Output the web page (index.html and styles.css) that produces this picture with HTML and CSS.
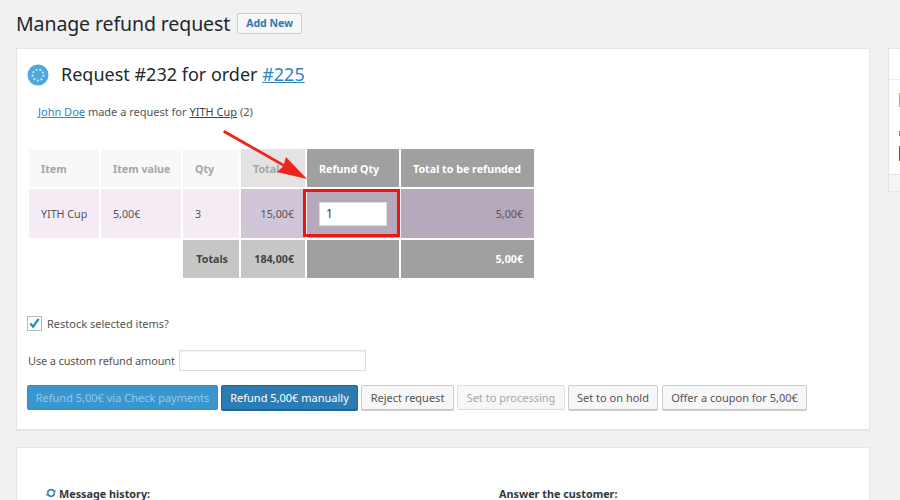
FILE: index.html
```html
<!DOCTYPE html>
<html lang="en">
<head>
<meta charset="utf-8">
<title>Manage refund request</title>
<link rel="stylesheet" href="styles.css">
</head>
<body>
<div class="page">
  <div class="main">
    <header class="page-head">
      <h1>Manage refund request</h1>
      <a class="add-new">Add New</a>
    </header>
    <section class="card request">
      <div class="title-row">
        <svg class="status" viewBox="0 0 22 22" width="22" height="22">
          <circle cx="11" cy="11" r="10.5" fill="#4fa8da"/>
          <circle cx="11" cy="11" r="5.5" fill="none" stroke="#d5ebf7" stroke-width="1.8" stroke-dasharray="1.8 2"/>
        </svg>
        <h2>Request #232 for order <a href="#">#225</a></h2>
      </div>
      <p class="summary"><a class="blue" href="#">John Doe</a> made a request for <a class="dark" href="#">YITH Cup</a> (2)</p>
      <div class="table-wrap">
        <table>
          <thead>
            <tr>
              <th class="c1">Item</th><th class="c2">Item value</th><th class="c3">Qty</th><th class="c4 total-h">Total</th><th class="c5 dark-h">Refund Qty</th><th class="c6 dark-h">Total to be refunded</th>
            </tr>
          </thead>
          <tbody>
            <tr class="row">
              <td>YITH Cup</td><td>5,00€</td><td>3</td><td class="num total-c">15,00€</td><td class="qty-c"><input class="qty" type="text" value="1"></td><td class="num qty-c">5,00€</td>
            </tr>
            <tr class="foot">
              <td class="blank" colspan="2"></td><td class="lab">Totals</td><td class="num lab">184,00€</td><td class="dk"></td><td class="num dk">5,00€</td>
            </tr>
          </tbody>
        </table>
        <div class="highlight"></div>
        <svg class="arrow" viewBox="0 0 100 60" width="100" height="60">
          <path d="M0 2.500 L1.500 0 L61 34 L63 27 L84 49 L54 42 L60 36.500 Z" fill="#f0241c"/>
        </svg>
      </div>
      <label class="restock"><span class="check"><svg viewBox="0 0 14 14" width="14" height="14"><path d="M2.500 7.500 L5.500 11 L11.500 2.500" fill="none" stroke="#1e8cbe" stroke-width="2.400"/></svg></span>Restock selected items?</label>
      <div class="custom"><span class="custom-label">Use a custom refund amount</span><input class="amount" type="text"></div>
      <div class="actions">
        <a class="btn pale">Refund 5,00€ via Check payments</a>
        <a class="btn primary">Refund 5,00€ manually</a>
        <a class="btn reject">Reject request</a>
        <a class="btn off">Set to processing</a>
        <a class="btn hold">Set to on hold</a>
        <a class="btn coupon">Offer a coupon for 5,00€</a>
      </div>
    </section>
    <section class="card messages">
      <div class="msg-col"><svg class="refresh" viewBox="0 0 10 10" width="10" height="10"><path d="M1.700 5 A3.300 3.300 0 0 1 8 3.600 M8.300 5 A3.300 3.300 0 0 1 2 6.400" fill="none" stroke="#2e7fb8" stroke-width="1.600"/><path d="M9.500 1.500 L9.500 4.500 L6.500 4.500 Z M.5 8.500 L.5 5.500 L3.500 5.500 Z" fill="#2e7fb8"/></svg><strong>Message history:</strong></div>
      <div class="msg-col answer"><strong>Answer the customer:</strong></div>
    </section>
  </div>
  <aside class="side">
    <div class="side-top"></div>
    <div class="side-body"><i class="m1"></i><i class="m2"></i><i class="m3"></i></div>
    <div class="side-foot"></div>
  </aside>
</div>
</body>
</html>
```
FILE: styles.css
```css
* { box-sizing: border-box; }
html, body { margin: 0; height: 100%; overflow: hidden; }
body {
  background: #f1f1f1;
  color: #444;
  font-family: "Noto Sans", "Open Sans", sans-serif;
  font-size: 11px;
}
.page { display: flex; gap: 18px; padding-left: 16px; height: 500px; overflow: hidden; }
.main { flex: 0 0 854px; }
.page-head { display: flex; align-items: center; gap: 7px; height: 48px; padding-bottom: 1px; }
h1 { margin: 0; font-size: 19.500px; font-weight: 400; color: #23282d; letter-spacing: -.1px; }
.add-new {
  font-size: 10.500px; font-weight: 700; color: #2b78b5;
  background: #f7f7f7; border: 1px solid #ccc; border-radius: 2px;
  padding: 0 8px; height: 21px; line-height: 19px; width: 65px; white-space: nowrap;
}
.card { background: #fff; border: 1px solid #e5e5e5; box-shadow: 0 1px 1px rgba(0,0,0,.04); }
.request { height: 382px; padding: 0 12px; }
.title-row { display: flex; align-items: center; gap: 12px; height: 51px; margin-left: -2px; }
.status { flex: none; }
h2 { margin: 0 0 2px; font-size: 18px; font-weight: 400; color: #23282d; }
h2 a { color: #2b84c4; }
.summary { margin: 0; padding: 4px 0 0 9px; height: 47px; font-size: 11px; line-height: 16px; color: #555; }
.blue { color: #2b84c4; }
.dark { color: #444; }
.table-wrap { position: relative; width: 509px; margin-left: -2px; }
table { border-collapse: separate; border-spacing: 2px; table-layout: fixed; width: 509px; font-size: 10.700px; color: #555; }
th { height: 38px; text-align: left; padding: 2px 12px 0; font-weight: 700; color: #a6a6a6; background: #f8f8f8; white-space: nowrap; }
td { padding: 0 11px 0 12px; white-space: nowrap; }
.c1 { width: 70px; } .c2 { width: 80px; } .c3 { width: 56px; } .c4 { width: 64px; } .c5 { width: 92px; } .c6 { width: 133px; }
th.total-h { background: #e4e2e3; }
th.dark-h { background: #a0a0a0; color: #fff; }
.row td { height: 49px; background: #f5ebf5; }
.row td.total-c { background: #d1c5d8; }
.row td.qty-c { background: #b6a9bb; }
.num { text-align: right; }
.foot td { height: 38px; }
.foot td.blank { background: #fff; }
.foot td.lab { background: #c6c6c6; color: #444; font-weight: 700; text-align: right; }
.foot td.dk { background: #a0a0a0; color: #fff; font-weight: 700; }
.qty { display: block; width: 68px; height: 24px; border: 1px solid #ddd; background: #fff; padding: 0 6px; font: 12px "Noto Sans", sans-serif; color: #32373c; outline: 0; }
.highlight { position: absolute; left: 276px; top: 42px; width: 97px; height: 48px; border: 3px solid #f0150f; }
.arrow { position: absolute; left: 196px; top: -17px; }
.restock { display: flex; align-items: center; gap: 5px; margin: 35px 0 0 -2px; height: 16px; color: #555; font-size: 11px; }
.check { width: 15px; height: 15px; border: 1px solid #b4b9be; background: #fff; display: flex; align-items: center; justify-content: center; }
.custom { display: flex; align-items: center; gap: 4px; margin: 19px 0 0 -1px; height: 21px; color: #555; font-size: 11px; }
.custom-label { letter-spacing: -.15px; }
.amount { width: 187px; height: 21px; border: 1px solid #ddd; box-shadow: inset 0 1px 2px rgba(0,0,0,.07); background: #fff; outline: 0; }
.actions { display: flex; gap: 3px; margin: 14px 0 0 -2px; }
.btn { flex: none; height: 25px; line-height: 23px; padding: 0; border: 1px solid #ccc; border-radius: 2px; background: #f7f7f7; box-shadow: 0 1px 0 #ccc; color: #555; font-size: 11px; white-space: nowrap; text-align: center; }
.btn.primary { background: #2b7bb4; border-color: #1f689c; color: #fff; box-shadow: 0 1px 0 #1f689c; width: 137px; }
.btn.pale { background: #3b96cf; border-color: #358bc2; color: #8ccbec; box-shadow: none; width: 191px; }
.btn.reject { width: 93px; }
.btn.off { background: #f7f7f7; border-color: #ddd; color: #a8a8a8; box-shadow: none; width: 108px; }
.btn.hold { width: 90px; }
.btn.coupon { width: 145px; margin-left: 1px; }
.messages { margin-top: 17px; height: 60px; display: flex; padding: 38px 0 0 29px; font-size: 10.800px; color: #32373c; }
.msg-col { flex: 0 0 453px; display: flex; align-items: center; gap: 3px; height: 14px; }
.refresh { flex: none; }
.answer { flex: 1; }
.side { flex: none; width: 40px; margin-top: 48px; height: 144px; background: #fff; border: 1px solid #e5e5e5; display: flex; flex-direction: column; }
.side-top { height: 31px; border-bottom: 1px solid #eee; }
.side-body { flex: 1; position: relative; }
.side-body i { position: absolute; left: 10px; }
.side-body .m1 { top: 13px; width: 1px; height: 14px; background: #b9a98c; }
.side-body .m2 { top: 51px; width: 1px; height: 5px; background: #a88a50; }
.side-body .m3 { top: 66px; width: 1px; height: 15px; background: #6d5530; }
.side-foot { height: 17px; background: #f5f5f5; border-top: 1px solid #e5e5e5; }
```
